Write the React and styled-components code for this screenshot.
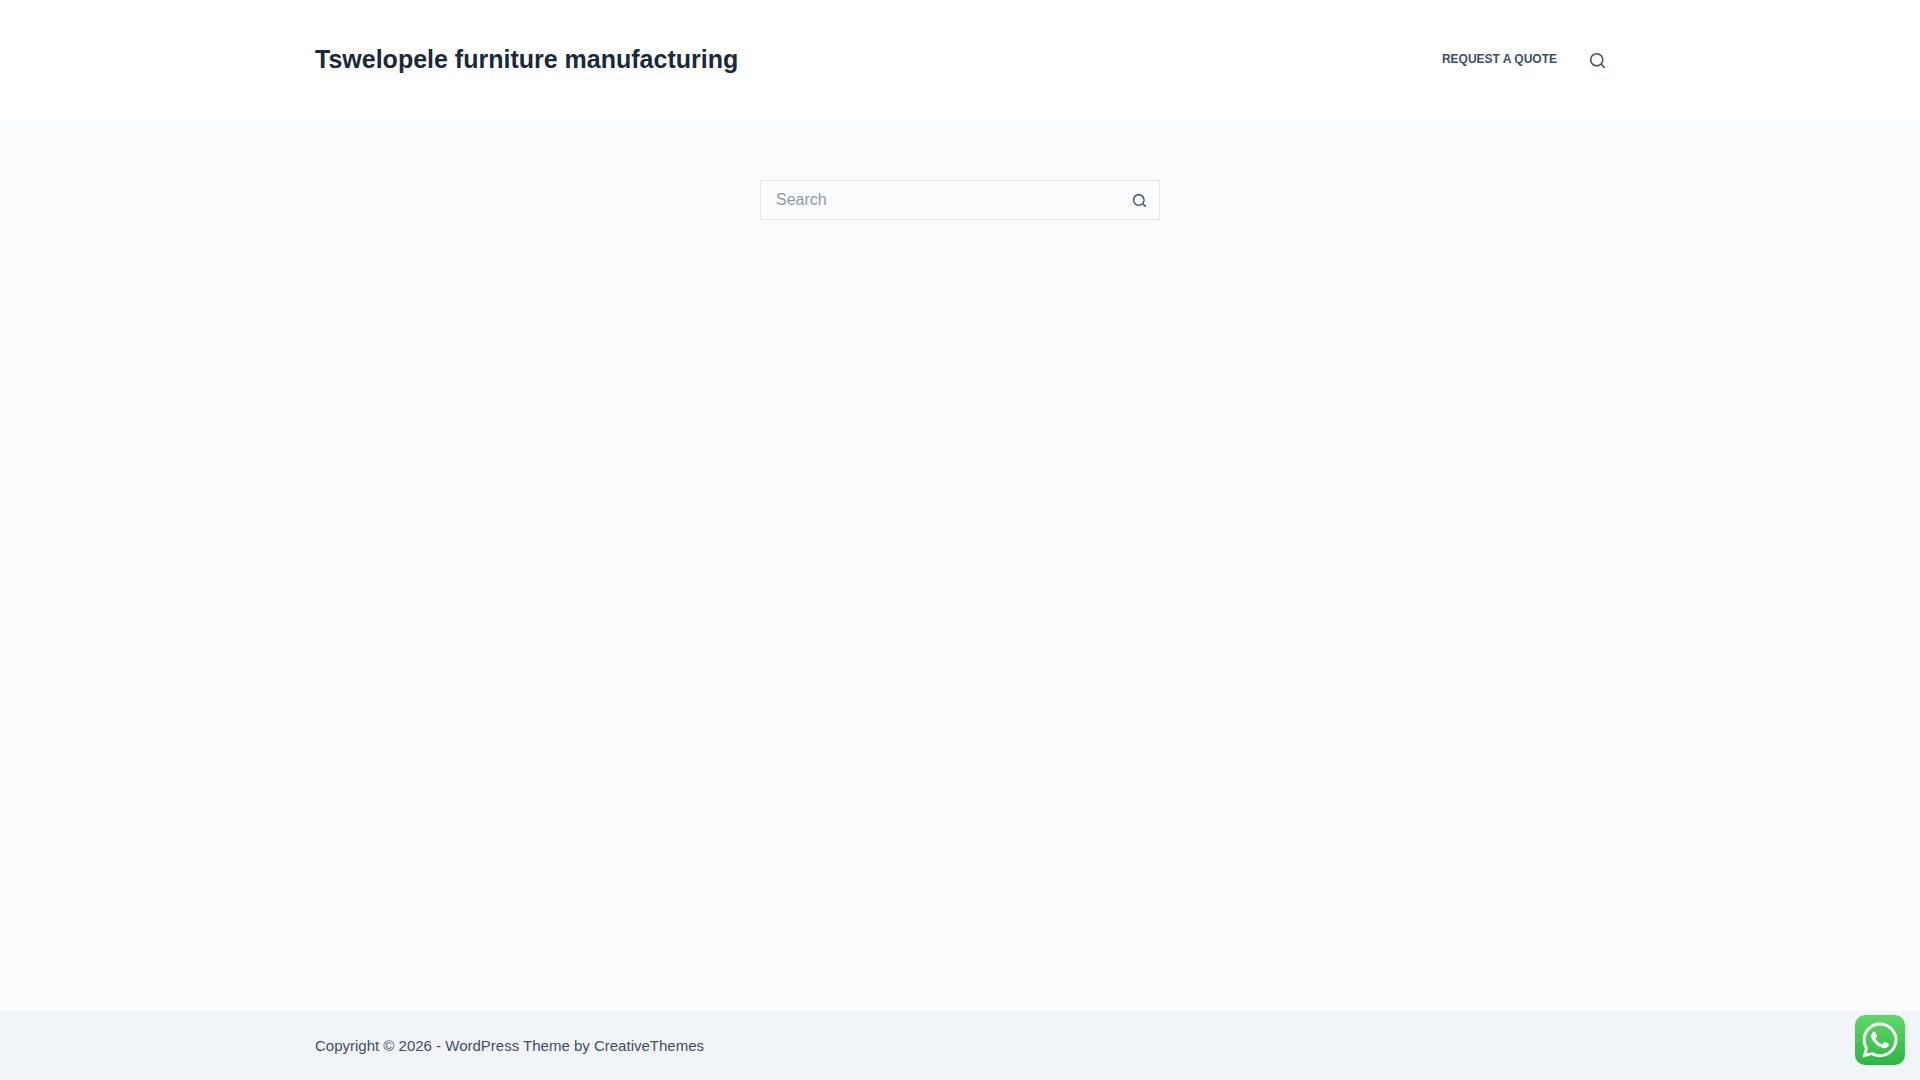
import React from "react";
import styled, { createGlobalStyle } from "styled-components";
import { FaWhatsapp } from "react-icons/fa";

const GlobalStyle = createGlobalStyle`
  html, body {
    margin: 0;
    padding: 0;
  }
  body {
    font-family: "Liberation Sans", Arial, sans-serif;
    font-size: 15px;
    color: #3a4f66;
    background: #fafbfc;
  }
`;

const Page = styled.div`
  min-height: 100vh;
  display: flex;
  flex-direction: column;
`;

const Header = styled.header`
  height: 120px;
  background: #ffffff;
`;

const Container = styled.div`
  width: 1290px;
  height: 100%;
  margin: 0 auto;
  display: flex;
  align-items: center;
  justify-content: space-between;
`;

const SiteTitle = styled.a`
  font-size: 25px;
  font-weight: 700;
  line-height: 1.5;
  color: #192a3d;
`;

const Nav = styled.nav`
  display: flex;
  align-items: center;
  gap: 33px;
  padding-bottom: 2px;
`;

const NavLink = styled.a`
  font-size: 12px;
  font-weight: 700;
  text-transform: uppercase;
  color: #3a4f66;
`;

const SearchIcon = ({ size }) => (
  <svg width={size} height={size} viewBox="0 0 15 15" fill="currentColor">
    <path d="M14.8,13.7L12,11c0.9-1.2,1.5-2.6,1.5-4.2c0-3.7-3-6.8-6.8-6.8S0,3,0,6.8s3,6.8,6.8,6.8c1.6,0,3.1-0.6,4.2-1.5l2.8,2.8c0.1,0.1,0.3,0.2,0.5,0.2s0.4-0.1,0.5-0.2C15.1,14.5,15.1,14,14.8,13.7z M1.5,6.8c0-2.9,2.4-5.2,5.2-5.2S12,3.9,12,6.8S9.6,12,6.8,12S1.5,9.6,1.5,6.8z" />
  </svg>
);

const HeaderSearch = styled.button`
  display: flex;
  padding: 0;
  margin-top: 2px;
  border: none;
  background: none;
  color: #3a4f66;
`;

const Main = styled.main`
  flex: 1;
  display: flex;
  justify-content: center;
  padding-top: 60px;
`;

const SearchForm = styled.form`
  position: relative;
  width: 400px;
  height: 40px;
`;

const SearchInput = styled.input`
  box-sizing: border-box;
  width: 100%;
  height: 100%;
  padding: 0 50px 0 15px;
  border: 1px solid #e1e8ed;
  border-radius: 2px;
  background: transparent;
  font-family: inherit;
  font-size: 16px;
  color: #3a4f66;
  outline: none;

  &::placeholder {
    color: rgba(58, 79, 102, 0.6);
    opacity: 1;
  }
`;

const SearchButton = styled.button`
  position: absolute;
  top: 0;
  right: 1px;
  width: 40px;
  height: 40px;
  padding: 0;
  display: flex;
  align-items: center;
  justify-content: center;
  border: none;
  background: none;
  color: #3a4f66;
`;

const Footer = styled.footer`
  height: 69px;
  background: #f2f5f7;
  font-size: 15px;
`;

const FooterInner = styled(Container)`
  justify-content: flex-start;
`;

const WhatsApp = styled.a`
  position: fixed;
  right: 15px;
  bottom: 15px;
  width: 50px;
  height: 50px;
  display: flex;
  align-items: center;
  justify-content: center;
  border-radius: 10px;
  background: linear-gradient(180deg, #5fd76a 0%, #2db742 100%);
  color: #ffffff;
  font-size: 40px;
`;

export default function App() {
  return (
    <Page>
      <GlobalStyle />
      <Header>
        <Container>
          <SiteTitle>Tswelopele furniture manufacturing</SiteTitle>
          <Nav>
            <NavLink>Request a quote</NavLink>
            <HeaderSearch aria-label="Search">
              <SearchIcon size={15} />
            </HeaderSearch>
          </Nav>
        </Container>
      </Header>
      <Main>
        <SearchForm>
          <SearchInput placeholder="Search" />
          <SearchButton aria-label="Search" type="button">
            <SearchIcon size={13} />
          </SearchButton>
        </SearchForm>
      </Main>
      <Footer>
        <FooterInner>Copyright © 2026 - WordPress Theme by CreativeThemes</FooterInner>
      </Footer>
      <WhatsApp>
        <FaWhatsapp />
      </WhatsApp>
    </Page>
  );
}
